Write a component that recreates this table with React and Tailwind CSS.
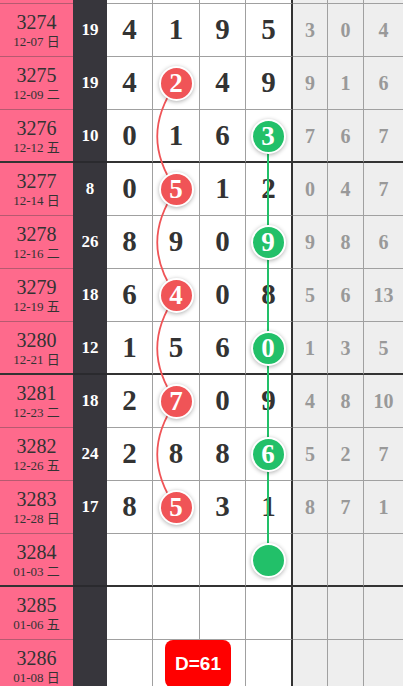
import React from "react";

const rows = [
  { no: "3274", date: "12-07 日", sum: 19, nums: [4, 1, 9, 5], side: [3, 0, 4] },
  { no: "3275", date: "12-09 二", sum: 19, nums: [4, 2, 4, 9], side: [9, 1, 6] },
  { no: "3276", date: "12-12 五", sum: 10, nums: [0, 1, 6, 3], side: [7, 6, 7], thick: true },
  { no: "3277", date: "12-14 日", sum: 8, nums: [0, 5, 1, 2], side: [0, 4, 7] },
  { no: "3278", date: "12-16 二", sum: 26, nums: [8, 9, 0, 9], side: [9, 8, 6] },
  { no: "3279", date: "12-19 五", sum: 18, nums: [6, 4, 0, 8], side: [5, 6, 13] },
  { no: "3280", date: "12-21 日", sum: 12, nums: [1, 5, 6, 0], side: [1, 3, 5], thick: true },
  { no: "3281", date: "12-23 二", sum: 18, nums: [2, 7, 0, 9], side: [4, 8, 10] },
  { no: "3282", date: "12-26 五", sum: 24, nums: [2, 8, 8, 6], side: [5, 2, 7] },
  { no: "3283", date: "12-28 日", sum: 17, nums: [8, 5, 3, 1], side: [8, 7, 1] },
  { no: "3284", date: "01-03 二", thick: true },
  { no: "3285", date: "01-06 五" },
  { no: "3286", date: "01-08 日" },
];

// balls: red in column 2, green in column 4
const red = [
  { row: 1, n: 2 },
  { row: 3, n: 5 },
  { row: 5, n: 4 },
  { row: 7, n: 7 },
  { row: 9, n: 5 },
];
const green = [
  { row: 2, n: 3 },
  { row: 4, n: 9 },
  { row: 6, n: 0 },
  { row: 8, n: 6 },
  { row: 10, n: null },
];

const ROW_H = 53;
const TOP = 4;
const cy = (i) => TOP + ROW_H * i + 26.5;
const RED_X = 176;
const GREEN_X = 268;

const serif = { fontFamily: '"Liberation Serif", "Noto Sans CJK SC", serif' };

function hasBall(i, c) {
  if (c === 1) return red.some((b) => b.row === i);
  if (c === 3) return green.some((b) => b.row === i);
  return false;
}

function Row({ r, i }) {
  const bottom = r.thick ? "border-b-2 border-b-[#333]" : "border-b border-b-[#a0a0a0]";
  return (
    <div className="flex h-[53px]">
      <div
        className={`w-[73px] bg-[#fe6a8c] flex flex-col items-center justify-center text-[#333] ${
          r.thick ? "border-b-2 border-b-[#333]" : "border-b border-b-[#b65a70]"
        }`}
      >
        <div className="text-[20px] leading-[20px] mt-[2px]">{r.no}</div>
        <div className="text-[13px] leading-[16px] mt-[2px]">{r.date}</div>
      </div>
      <div
        className={`w-[34px] bg-[#37363c] flex items-center justify-center text-white font-bold text-[17px] ${
          r.thick ? "border-b-2 border-b-[#2a2a2e]" : "border-b border-b-[#37363c]"
        }`}
      >
        {r.sum}
      </div>
      {[0, 1, 2, 3].map((c) => (
        <div
          key={c}
          className={`bg-white flex items-center justify-center font-bold text-[29px] text-[#333] ${bottom} ${
            c === 3 ? "w-[47px] border-r-2 border-r-[#333]" : c === 1 ? "w-[47px] border-r border-r-[#a0a0a0]" : "w-[46px] border-r border-r-[#a0a0a0]"
          }`}
        >
          {r.nums && !hasBall(i, c) ? r.nums[c] : ""}
        </div>
      ))}
      {[0, 1, 2].map((c) => (
        <div
          key={c}
          className={`bg-[#eeeeee] flex items-center justify-center font-bold text-[20px] text-[#999] ${bottom} ${
            c === 2 ? "flex-1" : c === 0 ? "w-[35px] border-r border-r-[#a0a0a0]" : "w-[36px] border-r border-r-[#a0a0a0]"
          }`}
        >
          {r.side ? r.side[c] : ""}
        </div>
      ))}
    </div>
  );
}

function Ball({ x, y, n, color }) {
  return (
    <div
      className={`absolute w-[35px] h-[35px] rounded-full border-2 border-white shadow-[0_1px_4px_rgba(0,0,0,0.3)] flex items-center justify-center text-white font-bold text-[27px] leading-none ${color}`}
      style={{ left: x - 17.5, top: y - 17.5 }}
    >
      {n}
    </div>
  );
}

export default function App() {
  let redPath = `M ${RED_X} ${cy(red[0].row)}`;
  for (let k = 1; k < red.length; k++) {
    const y1 = cy(red[k - 1].row);
    const y2 = cy(red[k].row);
    redPath += ` C ${RED_X - 25} ${y1 + 36}, ${RED_X - 25} ${y2 - 36}, ${RED_X} ${y2}`;
  }

  return (
    <div className="relative w-[403px] overflow-hidden" style={serif}>
      <div className="flex h-[4px]">
        <div className="w-[73px] bg-[#fe6a8c] border-b border-b-[#b65a70]" />
        <div className="w-[34px] bg-[#37363c]" />
        <div className="w-[46px] bg-white border-b border-b-[#a0a0a0] border-r border-r-[#a0a0a0]" />
        <div className="w-[47px] bg-white border-b border-b-[#a0a0a0] border-r border-r-[#a0a0a0]" />
        <div className="w-[46px] bg-white border-b border-b-[#a0a0a0] border-r border-r-[#a0a0a0]" />
        <div className="w-[47px] bg-white border-b border-b-[#a0a0a0] border-r-2 border-r-[#333]" />
        <div className="w-[35px] bg-[#eeeeee] border-b border-b-[#a0a0a0] border-r border-r-[#a0a0a0]" />
        <div className="w-[36px] bg-[#eeeeee] border-b border-b-[#a0a0a0] border-r border-r-[#a0a0a0]" />
        <div className="flex-1 bg-[#eeeeee] border-b border-b-[#a0a0a0]" />
      </div>
      {rows.map((r, i) => (
        <Row key={r.no} r={r} i={i} />
      ))}

      <div className="absolute inset-0 pointer-events-none">
        <svg width="403" height={TOP + ROW_H * rows.length} className="absolute left-0 top-0">
          <path d={redPath} fill="none" stroke="#f05457" strokeWidth="1.8" />
          <line
            x1={GREEN_X}
            y1={cy(green[0].row)}
            x2={GREEN_X}
            y2={cy(green[green.length - 1].row)}
            stroke="#22c069"
            strokeWidth="2"
          />
        </svg>
        {red.map((b) => (
          <Ball key={"r" + b.row} x={RED_X} y={cy(b.row)} n={b.n} color="bg-[#f05457]" />
        ))}
        {green.map((b) => (
          <Ball key={"g" + b.row} x={GREEN_X} y={cy(b.row)} n={b.n} color="bg-[#22c069]" />
        ))}
        <div
          className="absolute left-[165px] top-[640px] w-[66px] h-[48px] rounded-[8px] bg-[#ff0000] flex items-center justify-center text-white font-bold text-[19px]"
          style={{ fontFamily: '"Liberation Sans", Arial, sans-serif' }}
        >
          D=61
        </div>
      </div>
    </div>
  );
}
